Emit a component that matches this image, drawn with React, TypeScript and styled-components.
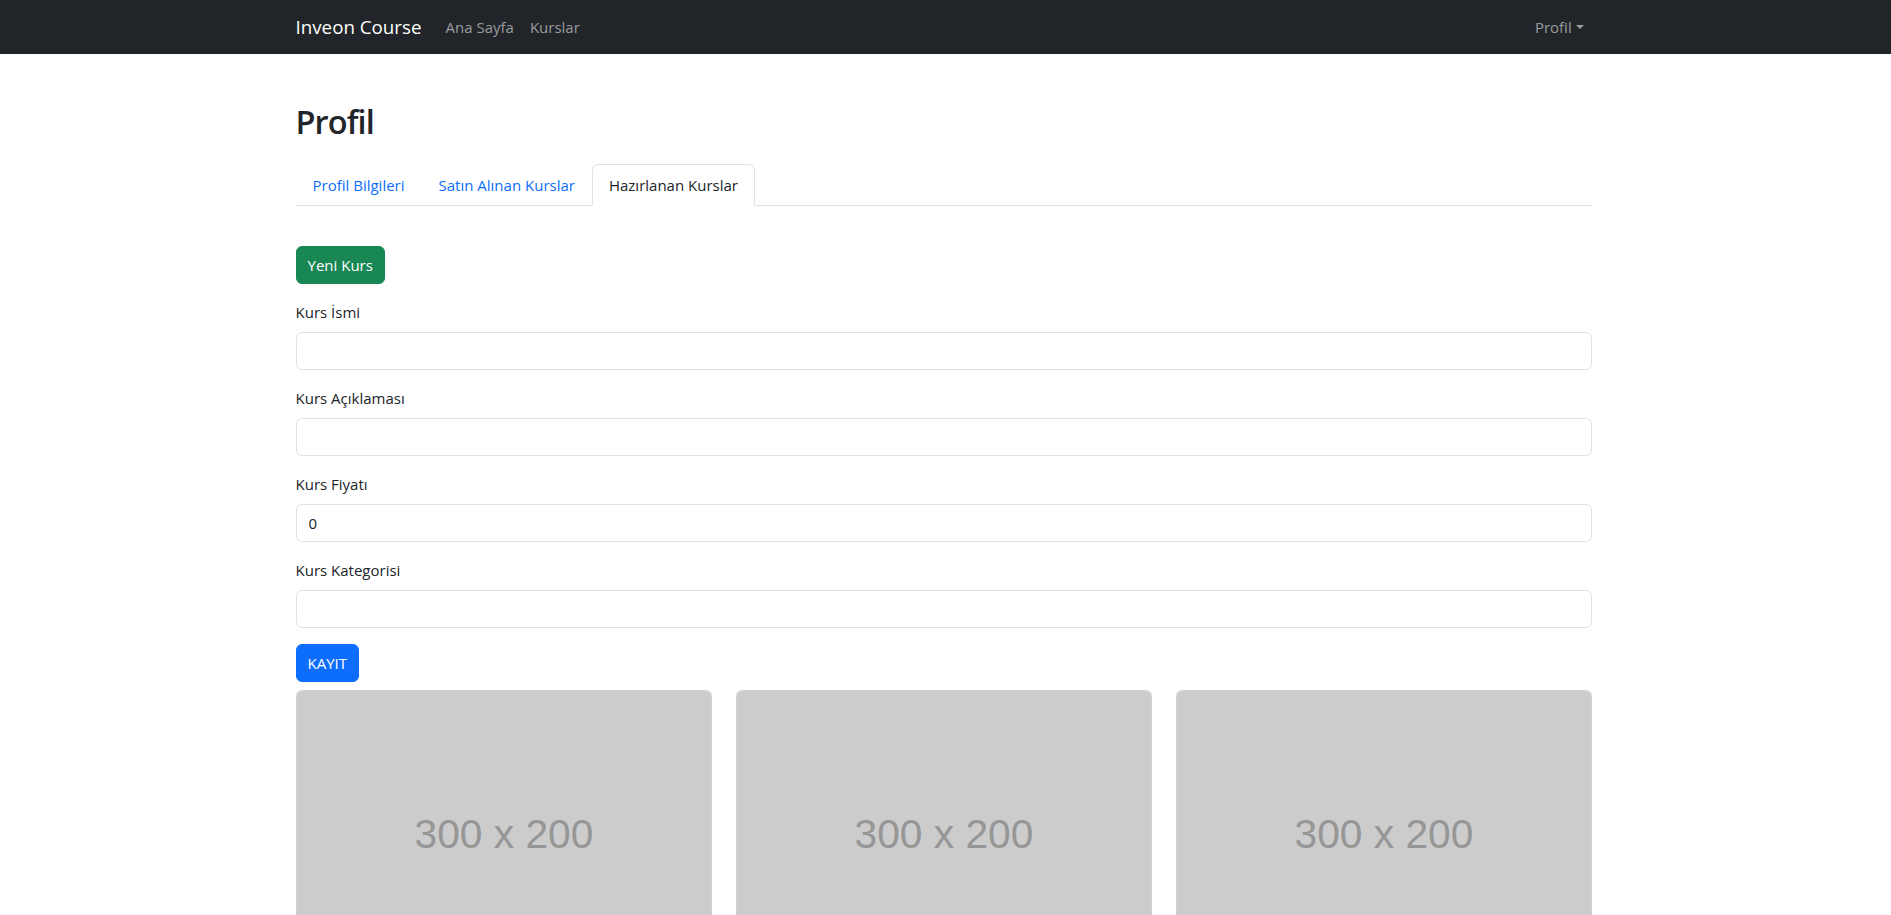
import React from "react";
import styled, { createGlobalStyle, css } from "styled-components";

const GlobalStyle = createGlobalStyle`
  html { scrollbar-width: none; }
  html::-webkit-scrollbar { display: none; }
  *, *::before, *::after { box-sizing: border-box; }
  body {
    margin: 0;
    font-family: "Open Sans", "Noto Sans", sans-serif;
    font-size: 15px;
    line-height: 24px;
    color: #212529;
    background: #fff;
  }
`;

const Container = styled.div`
  max-width: 1320px;
  margin: 0 auto;
  padding: 0 14px 0 10px;
`;

const NavBar = styled.nav`
  background: #212529;
  padding: 7px 0;
`;

const NavInner = styled(Container)`
  display: flex;
  align-items: center;
`;

const Brand = styled.a`
  color: #fff;
  font-size: 18.75px;
  line-height: 30px;
  padding: 5px 0;
  margin-right: 16px;
  text-decoration: none;
`;

const NavList = styled.ul<{ $end?: boolean }>`
  display: flex;
  list-style: none;
  margin: 0;
  padding: 0;
  ${(p) => p.$end && css`margin-left: auto;`}
`;

const NavLink = styled.a<{ $caret?: boolean }>`
  display: block;
  padding: 8px;
  color: rgba(255, 255, 255, 0.55);
  text-decoration: none;
  ${(p) =>
    p.$caret &&
    css`
      &::after {
        content: "";
        display: inline-block;
        margin-left: 0.255em;
        vertical-align: 0.255em;
        border-top: 0.3em solid;
        border-right: 0.3em solid transparent;
        border-left: 0.3em solid transparent;
        border-bottom: 0;
      }
    `}
`;

const Title = styled.h1`
  font-size: 32.5px;
  font-weight: 600;
  line-height: 40px;
  letter-spacing: -0.9px;
  margin: 48px 0 22px;
`;

const Tabs = styled.ul`
  display: flex;
  list-style: none;
  margin: 0;
  padding: 0;
  border-bottom: 1px solid #dee2e6;
`;

const Tab = styled.a<{ $active?: boolean }>`
  display: block;
  padding: 8px 16px;
  margin-bottom: -1px;
  border: 1px solid transparent;
  border-top-left-radius: 6px;
  border-top-right-radius: 6px;
  color: #0d6efd;
  text-decoration: none;
  ${(p) =>
    p.$active &&
    css`
      color: #212529;
      background: #fff;
      border-color: #dee2e6 #dee2e6 #fff;
    `}
`;

const Pane = styled.div`
  padding-top: 40px;
`;

const Button = styled.button<{ $variant: "success" | "primary" }>`
  display: block;
  font-family: inherit;
  font-size: 15px;
  line-height: 24px;
  padding: 6px 11px;
  border-radius: 6px;
  color: #fff;
  border: 1px solid;
  ${(p) =>
    p.$variant === "success"
      ? css`
          background: #198754;
          border-color: #198754;
          margin-bottom: 16px;
        `
      : css`
          background: #0d6efd;
          border-color: #0d6efd;
          margin-bottom: 8px;
        `}
`;

const Field = styled.div`
  margin-bottom: 16px;
`;

const Label = styled.label`
  display: block;
  margin-bottom: 8px;
`;

const Input = styled.input`
  display: block;
  width: 100%;
  height: 38px;
  padding: 6px 12px;
  font-family: inherit;
  font-size: 15px;
  line-height: 24px;
  color: #212529;
  background: #fff;
  border: 1px solid #dee2e6;
  border-radius: 6px;
`;

const CardRow = styled.div`
  display: grid;
  grid-template-columns: repeat(3, 1fr);
  gap: 24px;
`;

const Card = styled.div`
  border: 1px solid rgba(0, 0, 0, 0.175);
  border-radius: 6px;
  overflow: hidden;
  background: #fff;
`;

const PlaceholderSvg = styled.svg`
  display: block;
  width: 100%;
  height: auto;
`;

const Placeholder = () => (
  <PlaceholderSvg viewBox="0 0 300 200" xmlns="http://www.w3.org/2000/svg">
    <rect width="300" height="200" fill="#cccccc" />
    <text
      x="150"
      y="114"
      textAnchor="middle"
      fill="#969696"
      fontFamily="'Liberation Sans', Arial, sans-serif"
      fontSize="29.5"
    >
      300 x 200
    </text>
  </PlaceholderSvg>
);

const fields = [
  { label: "Kurs İsmi", value: "" },
  { label: "Kurs Açıklaması", value: "" },
  { label: "Kurs Fiyatı", value: "0" },
  { label: "Kurs Kategorisi", value: "" },
];

export default function App() {
  return (
    <>
      <GlobalStyle />
      <NavBar>
        <NavInner>
          <Brand href="#">Inveon Course</Brand>
          <NavList>
            <li>
              <NavLink href="#">Ana Sayfa</NavLink>
            </li>
            <li>
              <NavLink href="#">Kurslar</NavLink>
            </li>
          </NavList>
          <NavList $end>
            <li>
              <NavLink href="#" $caret>
                Profil
              </NavLink>
            </li>
          </NavList>
        </NavInner>
      </NavBar>
      <Container>
        <Title>Profil</Title>
        <Tabs>
          <li>
            <Tab href="#">Profil Bilgileri</Tab>
          </li>
          <li>
            <Tab href="#">Satın Alınan Kurslar</Tab>
          </li>
          <li>
            <Tab href="#" $active>
              Hazırlanan Kurslar
            </Tab>
          </li>
        </Tabs>
        <Pane>
          <Button $variant="success">Yeni Kurs</Button>
          {fields.map((f) => (
            <Field key={f.label}>
              <Label>{f.label}</Label>
              <Input defaultValue={f.value} />
            </Field>
          ))}
          <Button $variant="primary">KAYIT</Button>
          <CardRow>
            {[0, 1, 2].map((i) => (
              <Card key={i}>
                <Placeholder />
              </Card>
            ))}
          </CardRow>
        </Pane>
      </Container>
    </>
  );
}
